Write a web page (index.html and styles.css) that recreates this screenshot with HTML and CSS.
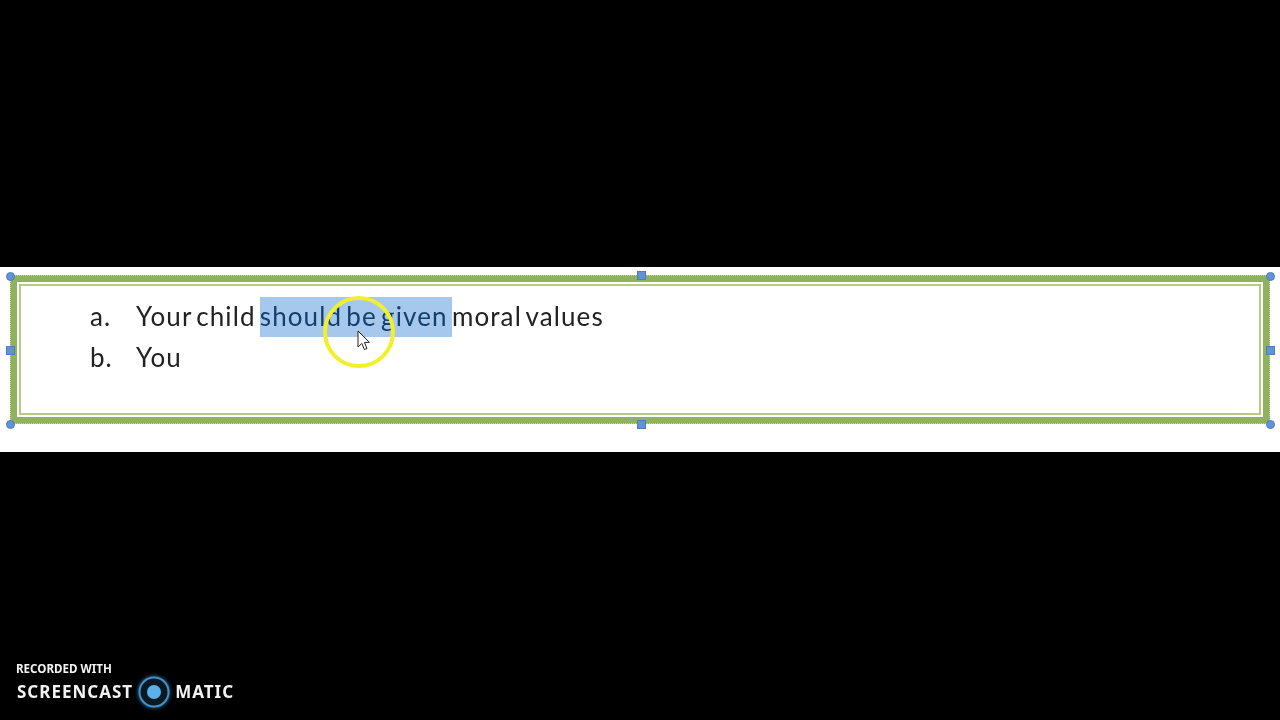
FILE: index.html
```html
<!DOCTYPE html>
<html lang="en">
<head>
    <meta charset="UTF-8">
    <title>Screen recording</title>
    <link rel="stylesheet" href="styles.css">
</head>
<body>
    <div class="slide">
        <div class="frame">
            <div class="frame-gap">
                <div class="frame-line">
                    <div class="row"><span class="marker">a.</span><span class="words">Your child <span class="selected">should be given </span>moral values</span></div>
                    <div class="row"><span class="marker">b.</span><span class="words">You</span></div>
                </div>
            </div>
            <span class="handle round top-left"></span>
            <span class="handle round top-right"></span>
            <span class="handle round bottom-left"></span>
            <span class="handle round bottom-right"></span>
            <span class="handle square top-mid"></span>
            <span class="handle square bottom-mid"></span>
            <span class="handle square left-mid"></span>
            <span class="handle square right-mid"></span>
        </div>
        <div class="click-ring"></div>
        <svg class="cursor" width="14" height="22" viewBox="0 0 14 22">
            <path d="M1 1 L1 17 L4.8 13.4 L7.4 19.6 L10 18.5 L7.4 12.5 L12.4 12.3 Z" fill="#fff" stroke="#222" stroke-width="1"/>
        </svg>
    </div>

    <div class="watermark">
        <div class="recorded">RECORDED WITH</div>
        <div class="brand">
            <span>SCREENCAST</span>
            <svg class="brand-logo" width="32" height="32" viewBox="0 0 32 32">
                <circle cx="16" cy="16" r="14.5" fill="#0a1822" stroke="#438fc4" stroke-width="2"/>
                <circle cx="16" cy="16" r="7" fill="#5cb0ea"/>
            </svg>
            <span>MATIC</span>
        </div>
    </div>
</body>
</html>
```

FILE: styles.css
```css
html, body {
    height: 100%;
}

body {
    margin: 0;
    background-color: #000;
    display: flex;
    flex-direction: column;
    padding-top: 267px;
    box-sizing: border-box;
    overflow: hidden;
}

.slide {
    position: relative;
    background-color: #fff;
    height: 185px;
    padding: 8px 10px 0;
    box-sizing: border-box;
    filter: blur(0.4px);
}

.frame {
    position: relative;
    height: 149px;
    box-sizing: border-box;
    background-color: #8fb35c;
    border: 1px dotted #c3d2ae;
    padding: 6px;
}

.frame-gap {
    height: 100%;
    box-sizing: border-box;
    background-color: #fff;
    padding: 2px;
}

.frame-line {
    height: 100%;
    box-sizing: border-box;
    background-color: #fff;
    border: 2px solid #b5ca85;
    padding: 10px 0 0 69px;
    font-family: "Lato", sans-serif;
    font-size: 26px;
    color: #222;
}

.row {
    display: flex;
    height: 41px;
    line-height: 41px;
}

.marker {
    width: 46px;
    letter-spacing: 1px;
}

.words {
    letter-spacing: 1.1px;
    word-spacing: -3.5px;
    white-space: pre;
}

.selected {
    display: inline-block;
    background-color: #a6c8ec;
    color: #143f6c;
    height: 40px;
    line-height: 38px;
}

.handle {
    position: absolute;
    width: 9px;
    height: 9px;
    box-sizing: border-box;
    background-color: #6292d8;
    border: 1px solid #4f7db8;
}

.round {
    border-radius: 50%;
}

.top-left { top: -4px; left: -5px; }
.top-right { top: -4px; right: -6px; }
.bottom-left { bottom: -6px; left: -5px; }
.bottom-right { bottom: -6px; right: -6px; }
.top-mid { top: -5px; left: 626px; }
.bottom-mid { bottom: -6px; left: 626px; }
.left-mid { top: 70px; left: -5px; }
.right-mid { top: 70px; right: -6px; }

.click-ring {
    position: absolute;
    left: 323px;
    top: 29px;
    width: 72px;
    height: 72px;
    box-sizing: border-box;
    border: 4px solid #f2f02a;
    border-radius: 50%;
}

.cursor {
    position: absolute;
    left: 357px;
    top: 63px;
}

.watermark {
    margin-top: auto;
    padding: 0 0 15px 16px;
    color: #f2f2f2;
    font-family: "Noto Sans", sans-serif;
    font-weight: 700;
    filter: blur(0.3px);
}

.recorded {
    font-size: 11.6px;
    line-height: 16px;
}

.brand {
    display: flex;
    align-items: center;
    gap: 5px;
    height: 28px;
    padding-left: 1px;
    font-size: 17px;
    letter-spacing: 1px;
}

.brand-logo {
    margin-top: 2px;
    filter: drop-shadow(0 0 2px #2f7fb8);
}
```
